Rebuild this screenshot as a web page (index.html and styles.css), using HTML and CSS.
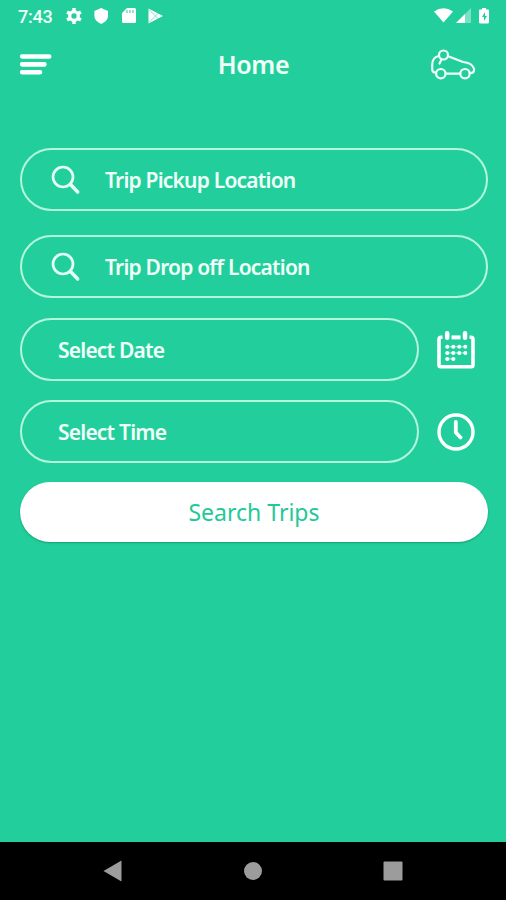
FILE: index.html
```html
<!DOCTYPE html>
<html lang="en">
  <head>
    <meta charset="UTF-8" />
    <meta name="viewport" content="width=device-width, initial-scale=1.0" />
    <title>Home</title>
    <link rel="stylesheet" href="styles.css">
  </head>
  <body>
    <div class="status-bar">
      <span class="clock">7:43</span>
      <svg class="status-left" width="98" height="18" viewBox="0 0 98 18" fill="#fff">
        <circle cx="9" cy="9" r="4.2" fill="none" stroke="#fff" stroke-width="3.4" />
        <path d="M9 1v16M2.1 5l13.8 8M2.1 13l13.8-8" fill="none" stroke="#fff" stroke-width="3.4" />
        <circle cx="9" cy="9" r="2.7" fill="#22cf9c" />
        <path d="M36.200 1l6.800 3v5c0 3.500-3.200 6.500-6.800 8-3.600-1.500-6.800-4.500-6.800-8V4z" />
        <path d="M62 1h7.500q1.500 0 1.500 1.500v12q0 1.500-1.500 1.500H58.500q-1.500 0-1.500-1.500V6z" />
        <path d="M62 3v3M65 3v3M68 3v3" stroke="#22cf9c" stroke-width="1" />
        <path d="M83.500 1.500L98 9l-14.500 7.500z" />
        <path d="M84 2.500L93.500 12M84 15.500L93.500 6" stroke="#22cf9c" stroke-width=".8" opacity=".7" />
      </svg>
      <svg class="status-right" width="57" height="18" viewBox="0 0 57 18" fill="#fff">
        <path d="M0 4.500Q9.500-2.200 19 4.500L9.500 15.500z" />
        <path d="M37 1v15H22z" opacity=".4" />
        <path d="M31 7v9h-9z" />
        <path d="M48 1h4v1.500h2q1 0 1 1V15q0 1.500-1.500 1.500h-7Q45 16.500 45 15V3.500q0-1 1-1h2z" />
        <path d="M51 5l-3 5h2v4l3-5h-2z" fill="#22cf9c" />
      </svg>
    </div>

    <div class="header">
      <svg class="menu-icon" width="32" height="22" viewBox="0 0 32 22">
        <path d="M2.200 2.500h27M2.200 10.400h22.200M2.200 18.200h17.800" stroke="#fff" stroke-width="4.600" stroke-linecap="round" />
      </svg>
      <h1>Home</h1>
      <svg class="car-icon" width="46" height="32" viewBox="0 0 46 32" fill="none" stroke="#f0fff8" stroke-width="2.200" stroke-linecap="round" stroke-linejoin="round">
        <circle cx="13.500" cy="6" r="4.500" />
        <path d="M11.500 10.500l-2 4M8.500 7C4 8 2.200 12 2.200 16v4q0 3.500 3.500 3.700M18.200 7.200L33 13q9 .8 11 6.500c.4 3-.5 4.700-4.300 4.700M16 24.600h13.500" />
        <circle cx="10.800" cy="24.700" r="4.700" />
        <circle cx="35" cy="24.700" r="4.700" />
      </svg>
    </div>

    <form class="trip-form">
      <div class="field search-field">
        <svg width="30" height="30" viewBox="0 0 30 30" fill="none" stroke="#e6fff5" stroke-linecap="round">
          <circle cx="12" cy="12" r="10" stroke-width="2.700" />
          <path d="M19.500 19.500l7.200 7.500" stroke-width="3.500" />
        </svg>
        <span>Trip Pickup Location</span>
      </div>
      <div class="field search-field drop-field">
        <svg width="30" height="30" viewBox="0 0 30 30" fill="none" stroke="#e6fff5" stroke-linecap="round">
          <circle cx="12" cy="12" r="10" stroke-width="2.700" />
          <path d="M19.500 19.500l7.200 7.500" stroke-width="3.500" />
        </svg>
        <span>Trip Drop off Location</span>
      </div>
      <div class="field-row">
        <div class="field short-field"><span>Select Date</span></div>
        <svg width="38" height="38" viewBox="0 0 38 38" fill="none" stroke="#fff">
          <path d="M5.500 6.300H4.200Q2 6.300 2 8.500V34q0 1.700 1.700 1.700h30.600Q36 35.700 36 34V8.500q0-2.200-2.200-2.200h-1.300" stroke-width="3.600" />
          <path d="M14.500 6.400h9" stroke-width="4" />
          <path d="M10.200 2.300v4.400M28 2.300v4.400" stroke-width="4.500" stroke-linecap="round" />
          <path d="M8 15.800h22M8 21.900h22M8 27.900h10.500" stroke-width="1" opacity=".65" />
          <path d="M10.300 15.800h.01M16.300 15.800h.01M22.300 15.800h.01M28.300 15.800h.01M10.300 21.900h.01M16.300 21.900h.01M22.300 21.900h.01M28.300 21.900h.01M10.300 27.900h.01M16.300 27.900h.01" stroke-width="4" stroke-linecap="round" />
        </svg>
      </div>
      <div class="field-row">
        <div class="field short-field"><span>Select Time</span></div>
        <svg width="38" height="38" viewBox="0 0 38 38" fill="none" stroke="#fff" stroke-linecap="round" stroke-linejoin="round">
          <circle cx="19" cy="19" r="17" stroke-width="3.400" />
          <path d="M18.800 9v10.500l4.800 5" stroke-width="3.800" />
        </svg>
      </div>
      <button type="button" class="search-btn">Search Trips</button>
    </form>

    <div class="nav-bar">
      <svg width="20" height="22" viewBox="0 0 20 22"><path d="M.5 11L18.500.5v21z" fill="#9c9c9c" /></svg>
      <svg width="20" height="20" viewBox="0 0 20 20"><circle cx="10" cy="10" r="9" fill="#9c9c9c" /></svg>
      <svg width="20" height="20" viewBox="0 0 20 20"><rect x=".5" y=".5" width="19" height="19" rx="1" fill="#9c9c9c" /></svg>
    </div>
  </body>
</html>
```

FILE: styles.css
```css
* {
  box-sizing: border-box;
}
body {
  font-family: "Noto Sans", "Open Sans", sans-serif;
  margin: 0;
  height: 900px;
  background-color: #22cf9c;
  color: #f0fff8;
  display: flex;
  flex-direction: column;
  overflow: hidden;
}
svg {
  display: block;
  flex-shrink: 0;
}
.status-bar {
  height: 32px;
  padding: 0 15px 0 18px;
  display: flex;
  align-items: center;
}
.clock {
  width: 47px;
  font-family: Roboto, sans-serif;
  font-size: 18px;
  font-weight: 500;
  letter-spacing: -0.2px;
}
.status-right {
  margin-left: auto;
}
.header {
  height: 66px;
  padding: 0 30px 0 20px;
  display: grid;
  grid-template-columns: 46px 1fr 46px;
  align-items: center;
}
.header h1 {
  margin: 0;
  padding: 0 0 2px 11px;
  font-size: 25px;
  font-weight: 600;
  text-align: center;
  letter-spacing: -0.4px;
}
.trip-form {
  flex: 1;
  padding: 50px 18px 0 20px;
}
.field {
  height: 63px;
  border: 2px solid #b5f5dc;
  border-radius: 32px;
  display: flex;
  align-items: center;
  font-size: 21px;
  font-weight: 600;
  letter-spacing: -0.8px;
  white-space: nowrap;
}
.search-field {
  padding-left: 29px;
  gap: 24px;
}
.drop-field {
  margin-top: 24px;
}
.field-row {
  margin-top: 20px;
  display: flex;
  align-items: center;
  gap: 18px;
}
.field-row + .field-row {
  margin-top: 19px;
}
.short-field {
  width: 399px;
  padding-left: 36px;
}
.search-btn {
  display: block;
  width: 100%;
  height: 60px;
  margin-top: 19px;
  border: none;
  border-radius: 30px;
  background-color: #fff;
  box-shadow: 0 1px 2px rgba(0, 80, 50, 0.4);
  color: #22c997;
  font-family: inherit;
  font-size: 23px;
}
.nav-bar {
  height: 58px;
  padding: 0 103px;
  background-color: #000;
  display: flex;
  align-items: center;
  justify-content: space-between;
}
```
